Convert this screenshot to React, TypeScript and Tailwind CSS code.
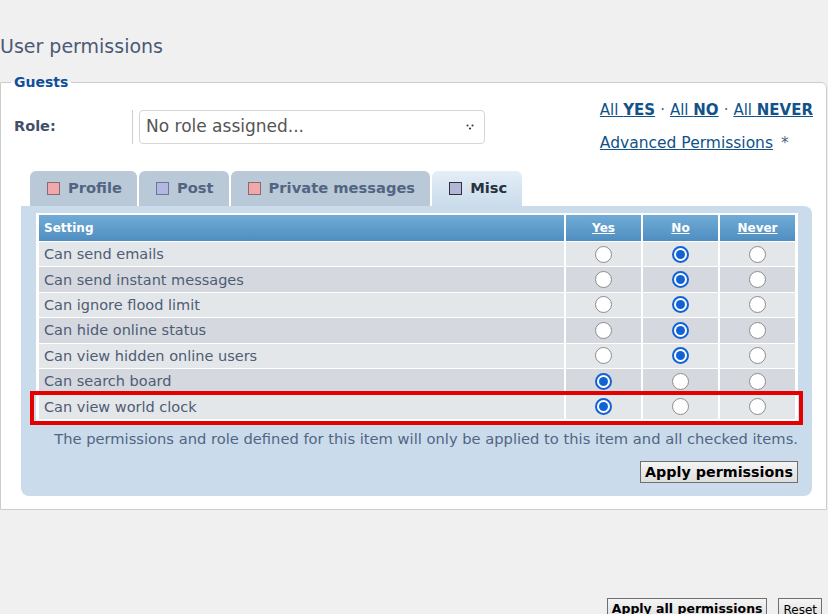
import React from 'react';

const rows = [
  { label: 'Can send emails', value: 'no' },
  { label: 'Can send instant messages', value: 'no' },
  { label: 'Can ignore flood limit', value: 'no' },
  { label: 'Can hide online status', value: 'no' },
  { label: 'Can view hidden online users', value: 'no' },
  { label: 'Can search board', value: 'yes' },
  { label: 'Can view world clock', value: 'yes' },
];

const tabs = [
  { label: 'Profile', swatch: 'bg-[#f0a8aa] border-[#8a6a70]' },
  { label: 'Post', swatch: 'bg-[#b3b8e2] border-[#6f7396]' },
  { label: 'Private messages', swatch: 'bg-[#f0a8aa] border-[#8a6a70]' },
  { label: 'Misc', swatch: 'bg-[#b4b6d6] border-[#2f3140]', active: true },
];

function Radio({ checked }: { checked: boolean }) {
  if (checked) {
    return (
      <span className="inline-flex w-[17px] h-[17px] rounded-full border-2 border-[#1262d6] bg-white items-center justify-center align-middle">
        <span className="w-[9px] h-[9px] rounded-full bg-[#1262d6]" />
      </span>
    );
  }
  return <span className="inline-block w-[17px] h-[17px] rounded-full border-[1.5px] border-[#8c8c8c] bg-white align-middle" />;
}

export default function App() {
  return (
    <div className="min-h-[614px] bg-[#f0f0f0] text-[#536482] font-['DejaVu_Sans',sans-serif] overflow-hidden">
      <h1 className="pt-[34px] pb-[16px] text-[19px] leading-[24px] text-[#4a5a76]">User permissions</h1>

      <fieldset className="mr-[1px] bg-white border border-[#cccccc] rounded-tr-[6px] px-[10px] pb-[13px]">
        <legend className="px-[3px] text-[14px] font-bold text-[#115098] leading-[16px]">Guests</legend>

        <div className="flex justify-between pt-[11px]">
          <div className="flex items-center">
            <div className="w-[122px] h-[34px] flex items-center pl-[3px] border-r border-[#cfcfcf] text-[14.5px] font-bold text-[#425067]">
              Role:
            </div>
            <div className="ml-[6px] w-[346px] h-[34px] border border-[#d6d6d6] rounded-[4px] flex items-center justify-between px-[6px]">
              <span className="text-[17px] text-[#555555]">No role assigned...</span>
              <svg width="8" height="6" viewBox="0 0 8 6" className="mr-[4px]">
                <circle cx="1.5" cy="1.5" r="1" fill="#333" />
                <circle cx="6.5" cy="1.5" r="1" fill="#333" />
                <circle cx="4" cy="4.5" r="1.1" fill="#333" />
              </svg>
            </div>
          </div>
          <div className="pr-[3px] leading-[18px]">
            <div className="flex items-center gap-[5px] text-[15px] text-[#105289]">
              <a className="underline">All <b>YES</b></a>
              <span className="text-[#536482]">·</span>
              <a className="underline">All <b>NO</b></a>
              <span className="text-[#536482]">·</span>
              <a className="underline">All <b>NEVER</b></a>
            </div>
            <div className="mt-[15px] text-[15.5px]">
              <a className="underline text-[#105289]">Advanced Permissions</a>
              <span className="ml-[8px] text-[#536482]">*</span>
            </div>
          </div>
        </div>

        <div className="mt-[19px] flex gap-[2px] pl-[19px]">
          {tabs.map((t) => (
            <div
              key={t.label}
              className={`h-[35px] flex items-center gap-[8px] pl-[17px] pr-[15px] rounded-t-[6px] text-[14.7px] font-bold ${
                t.active ? 'bg-gradient-to-b from-[#e4eef6] to-[#cadceb] text-[#28313f]' : 'bg-[#b9c9d8] text-[#536482]'
              }`}
            >
              <span className={`w-[13px] h-[13px] border ${t.swatch}`} />
              {t.label}
            </div>
          ))}
        </div>

        <div className="bg-[#cadceb] rounded-[8px] rounded-tl-none ml-[10px] mr-[4px] pt-[7px] pl-[15px] pr-[14px] pb-[13px]">
          <div className="relative bg-white p-px">
            <table className="w-full border-separate border-spacing-x-[2px] border-spacing-y-px">
              <thead>
                <tr className="text-white font-bold text-[12px]">
                  <th className="h-[26px] text-left pl-[5px] bg-gradient-to-b from-[#71acd6] to-[#4e8ec0]">Setting</th>
                  <th className="w-[75px] bg-gradient-to-b from-[#71acd6] to-[#4e8ec0] underline">Yes</th>
                  <th className="w-[75px] bg-gradient-to-b from-[#71acd6] to-[#4e8ec0] underline">No</th>
                  <th className="w-[75px] bg-gradient-to-b from-[#71acd6] to-[#4e8ec0] underline">Never</th>
                </tr>
              </thead>
              <tbody>
                {rows.map((r, i) => {
                  const bg = i % 2 === 0 ? 'bg-[#e4e7ea]' : 'bg-[#d5d9df]';
                  return (
                    <tr key={r.label} className="text-[#4e5c74] text-[14.5px]">
                      <td className={`h-[24.4px] pl-[5px] leading-[18px] ${bg}`}>{r.label}</td>
                      <td className={`text-center leading-none ${bg}`}><Radio checked={r.value === 'yes'} /></td>
                      <td className={`text-center leading-none ${bg}`}><Radio checked={r.value === 'no'} /></td>
                      <td className={`text-center leading-none ${bg}`}><Radio checked={r.value === 'never'} /></td>
                    </tr>
                  );
                })}
              </tbody>
            </table>
            <div className="absolute left-[-6px] right-[-5px] bottom-[-4px] h-[34px] border-4 border-[#e50000] pointer-events-none" />
          </div>

          <p className="mt-[8px] text-right text-[14.7px] leading-[20px] text-[#536482]">
            The permissions and role defined for this item will only be applied to this item and all checked items.
          </p>
          <div className="mt-[12px] flex justify-end">
            <button className="h-[22px] px-[4px] border border-[#6f6f6f] bg-gradient-to-b from-[#f4f4f4] to-[#dedede] text-[14.3px] font-bold text-black leading-none">
              Apply permissions
            </button>
          </div>
        </div>
      </fieldset>

      <div className="mt-[88px] flex justify-end gap-[11px] pr-[6px]">
        <button className="h-[24px] px-[4px] border border-[#6f6f6f] bg-gradient-to-b from-[#f4f4f4] to-[#dedede] text-[12.5px] font-bold text-black leading-none">
          Apply all permissions
        </button>
        <button className="h-[24px] px-[4px] border border-[#6f6f6f] bg-gradient-to-b from-[#f4f4f4] to-[#dedede] text-[12px] text-black leading-none">
          Reset
        </button>
      </div>
    </div>
  );
}
